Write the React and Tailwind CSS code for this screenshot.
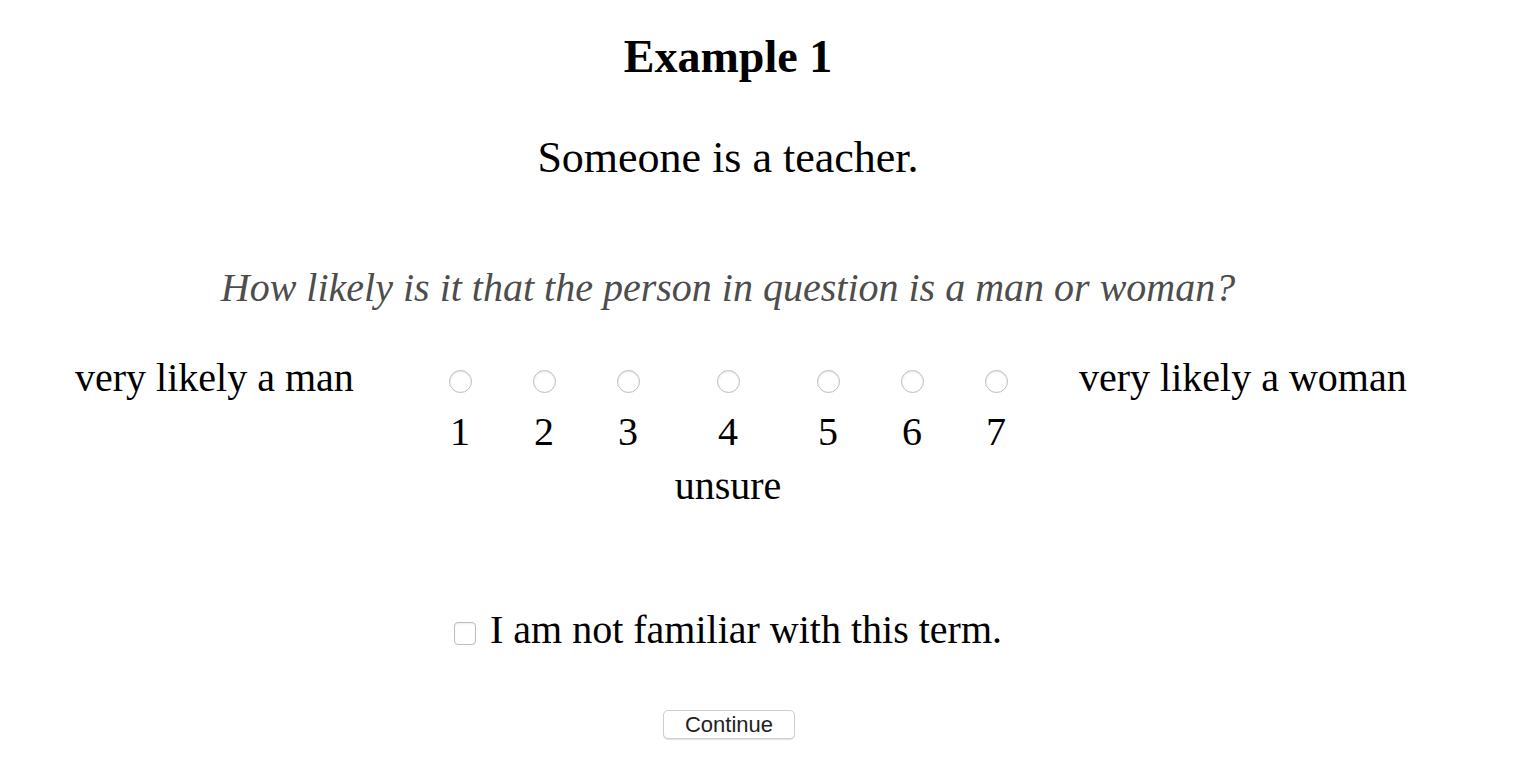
import React from 'react';

const serif = { fontFamily: '"Liberation Serif", "Times New Roman", serif' };

const columns = [
  { value: 1, width: 'w-[84px]' },
  { value: 2, width: 'w-[84px]' },
  { value: 3, width: 'w-[84px]' },
  { value: 4, width: 'w-[116px]', note: 'unsure' },
  { value: 5, width: 'w-[84px]' },
  { value: 6, width: 'w-[84px]' },
  { value: 7, width: 'w-[84px]' },
];

export default function App() {
  return (
    <div className="min-h-screen w-full bg-white text-black" style={serif}>
      <div className="w-[1456px] pt-[34px] text-center">
        {/* Title */}
        <h1 className="text-[46px] leading-[46px] font-bold">Example 1</h1>
        <p className="mt-[56px] text-[44px] leading-[44px]">Someone is a teacher.</p>

        {/* Question */}
        <p className="mt-[88px] text-[40px] leading-[40px] italic text-[#4d4d4d]">
          How likely is it that the person in question is a man or woman?
        </p>

        {/* Likert scale */}
        <div className="mt-[50px] flex items-start pl-[75px] text-[40px] leading-[40px]">
          <div className="w-[343px] text-left">very likely a man</div>
          {columns.map((c) => (
            <label key={c.value} className={`${c.width} flex flex-col items-center`}>
              <input
                type="radio"
                name="likert"
                className="mt-[12px] h-[23px] w-[23px] appearance-none rounded-full border border-[#bdbdbd] bg-white shadow-[inset_0_1px_2px_rgba(0,0,0,0.1)]"
              />
              <span className="mt-[19px]">{c.value}</span>
              {c.note && <span className="mt-[14px]">{c.note}</span>}
            </label>
          ))}
          <div className="pl-[41px] text-left">very likely a woman</div>
        </div>

        {/* Not familiar */}
        <label className="mt-[104px] flex items-center justify-center text-[40px] leading-[40px]">
          <input
            type="checkbox"
            className="mt-[6px] h-[23px] w-[22px] appearance-none rounded-[4px] border border-[#bdbdbd] bg-white shadow-[inset_0_1px_2px_rgba(0,0,0,0.08)]"
          />
          <span className="ml-[14px]">I am not familiar with this term.</span>
        </label>

        {/* Continue */}
        <div className="mt-[60px] flex justify-center">
          <button
            className="ml-[2px] h-[29px] w-[132px] rounded-[5px] border border-[#cfcfcf] bg-white text-[22px] leading-[27px] text-[#222] shadow-[0_1px_1px_rgba(0,0,0,0.12)]"
            style={{ fontFamily: '"Liberation Sans", Arial, sans-serif' }}
          >
            Continue
          </button>
        </div>
      </div>
    </div>
  );
}
